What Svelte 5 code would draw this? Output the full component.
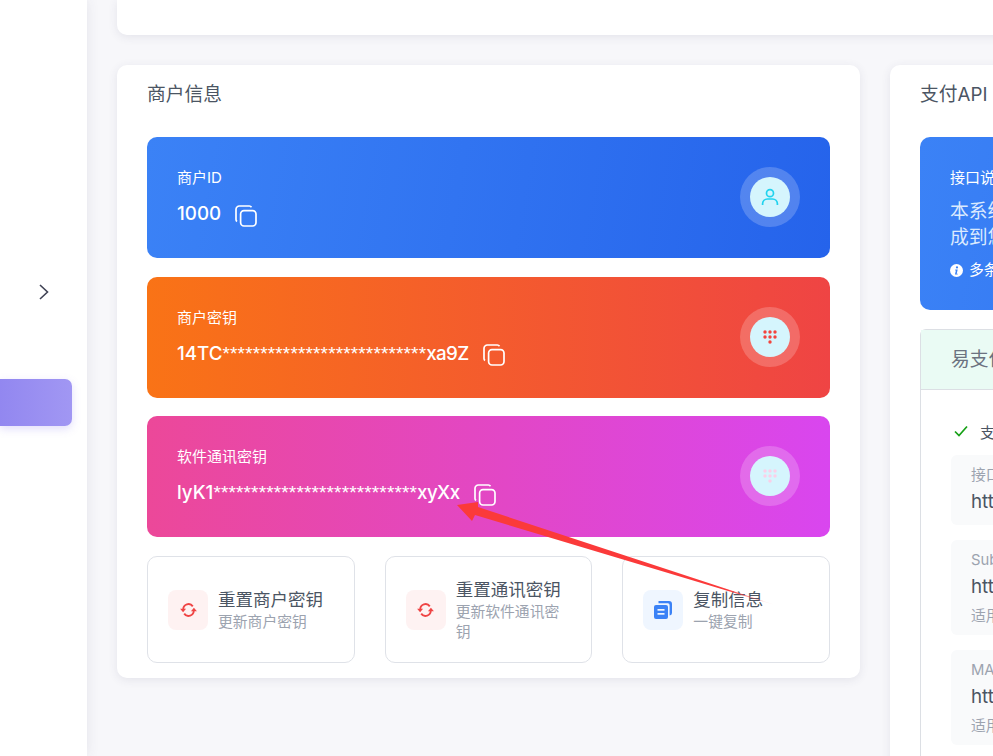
<script>
  const stars = '***************************';
  const keys = [
    { cls: 'blue', label: '商户ID', head: '1000', stars: '', tail: '', icon: 'user' },
    { cls: 'orange', label: '商户密钥', head: '14TC', stars, tail: 'xa9Z', icon: 'dots', dot: '#f4433c' },
    { cls: 'pink', label: '软件通讯密钥', head: 'lyK1', stars, tail: 'xyXx', icon: 'dots', dot: '#fbcfe8' }
  ];
  const actions = [
    { title: '重置商户密钥', sub: '更新商户密钥', icon: 'sync' },
    { title: '重置通讯密钥', sub: '更新软件通讯密钥', icon: 'sync' },
    { title: '复制信息', sub: '一键复制', icon: 'copy' }
  ];
  const dots = [[0,0],[5,0],[10,0],[0,5],[5,5],[10,5],[5,10]];
  const urls = [
    { label: '接口地址', url: 'https://pay.example.com/', note: '' },
    { label: 'Submit 接口', url: 'https://pay.example.com/submit.php', note: '适用于网页跳转支付' },
    { label: 'MAPI 接口', url: 'https://pay.example.com/mapi.php', note: '适用于服务器端调用' }
  ];
</script>

<div class="page">
  <aside class="side">
    <svg class="chev" width="12" height="16" viewBox="0 0 12 16"><path d="M2 1l7.5 7L2 15" fill="none" stroke="#3f4254" stroke-width="1.6"/></svg>
    <div class="pill"></div>
  </aside>

  <main class="main">
    <div class="top"></div>
    <div class="row">
      <section class="card left">
        <h2>商户信息</h2>
        <div class="keys">
          {#each keys as k}
            <div class="key {k.cls}">
              <div class="kt">
                <div class="lab">{k.label}</div>
                <div class="val">
                  <span>{k.head}<span class="stars">{k.stars}</span><span class="tail">{k.tail}</span></span>
                  <svg width="22" height="22" viewBox="0 0 22 22" fill="none" stroke="#fff" stroke-width="1.7">
                    <rect x="5.6" y="5.6" width="15.4" height="15.4" rx="3.4"/>
                    <path d="M2 16.5A2.6 2.6 0 0 1 1 14.4V4.4A3.4 3.4 0 0 1 4.4 1h9.8a2.6 2.6 0 0 1 2.3 1.2"/>
                  </svg>
                </div>
              </div>
              <div class="ring">
                <div class="disc">
                  {#if k.icon === 'user'}
                    <svg width="18" height="18" viewBox="0 0 18 18" fill="none" stroke="#22d3ee" stroke-width="1.7">
                      <circle cx="9" cy="5.2" r="3.5"/>
                      <path d="M1.6 17v-1.4A4.8 4.8 0 0 1 6.4 11h5.2a4.8 4.8 0 0 1 4.8 4.6V17"/>
                    </svg>
                  {:else}
                    <svg width="16" height="16" viewBox="0 0 16 16">
                      {#each dots as d}<circle cx={3 + d[0]} cy={3 + d[1]} r="1.7" fill={k.dot}/>{/each}
                    </svg>
                  {/if}
                </div>
              </div>
            </div>
          {/each}
        </div>
        <div class="acts">
          {#each actions as a}
            <div class="act">
              <div class="ico {a.icon}">
                {#if a.icon === 'sync'}
                  <svg width="17" height="14" viewBox="0 0 18 15" fill="none" stroke="#ef4444" stroke-width="2">
                    <path d="M3.4 7A5.6 5.6 0 0 1 13.600 3.600"/>
                    <path d="M14.600 8A5.6 5.6 0 0 1 4.400 11.400"/>
                    <path d="M0 6.200h6.400L3.200 10z" fill="#ef4444" stroke="none"/>
                    <path d="M18 8.800h-6.400L14.800 5z" fill="#ef4444" stroke="none"/>
                  </svg>
                {:else}
                  <svg width="18" height="18" viewBox="0 0 18 18">
                    <path d="M4.500 0H15a3 3 0 0 1 3 3v9a2.500 2.500 0 0 1-2.400 2.500V4a1.700 1.700 0 0 0-1.700-1.700H4.500z" fill="#3b82f6"/>
                    <rect x="0" y="4" width="14" height="14" rx="2" fill="#3b82f6"/>
                    <rect x="3.500" y="8" width="7" height="1.700" fill="#eff6ff"/>
                    <rect x="3.500" y="12" width="7" height="1.700" fill="#eff6ff"/>
                  </svg>
                {/if}
              </div>
              <div class="at">
                <div class="att">{a.title}</div>
                <div class="ats">{a.sub}</div>
              </div>
            </div>
          {/each}
        </div>
      </section>

      <section class="card right">
        <h2>支付API</h2>
        <div class="info">
          <div class="lab">接口说明</div>
          <p>本系统提供完整的支付接口，支持多种支付方式，可通过以下接口将功能集成到您的网站或应用中。</p>
          <div class="tip">
            <svg width="13" height="13" viewBox="0 0 13 13"><circle cx="6.5" cy="6.500" r="6.500" fill="#fff"/><circle cx="7" cy="3.400" r="1.100" fill="#3b82f6"/><path d="M5.300 5.600h2.400l-1 4.100h1v.8H4.900l1-4.100h-.8z" fill="#3b82f6"/></svg>
            <span>多条接口线路可供选择</span>
          </div>
        </div>
        <div class="panel">
          <div class="phead">易支付兼容接口</div>
          <div class="pbody">
            <div class="ok">
              <svg width="14" height="12" viewBox="0 0 14 12"><path d="M1 6.500l4 4 8-9" fill="none" stroke="#15a015" stroke-width="1.700"/></svg>
              <span>支持易支付接口协议</span>
            </div>
            {#each urls as u}
              <div class="url">
                <div class="ul">{u.label}</div>
                <div class="uv">{u.url}</div>
                {#if u.note}<div class="un">{u.note}</div>{/if}
              </div>
            {/each}
          </div>
        </div>
      </section>
    </div>
  </main>

  <svg class="arrow" width="993" height="756" viewBox="0 0 993 756">
    <defs>
      <linearGradient id="ag" gradientUnits="userSpaceOnUse" x1="457" y1="505" x2="775" y2="605">
        <stop offset="0.85" stop-color="#fb3a3a"/>
        <stop offset="1" stop-color="#fb3a3a" stop-opacity="0.1"/>
      </linearGradient>
    </defs>
    <path d="M457 505L478 502L478 507L775 605L475 515L472 521Z" fill="url(#ag)"/>
  </svg>
</div>

<style>
  :global(body) { margin: 0; background: #f7f7fa; }
  .page {
    position: relative;
    display: flex;
    width: 993px;
    height: 756px;
    overflow: hidden;
    background: #f7f7fa;
    font-family: Inter, "Noto Sans CJK SC", sans-serif;
  }
  .side {
    flex: none;
    width: 87px;
    background: #fff;
    box-shadow: 0 0 12px rgba(60, 60, 100, .1);
    padding-top: 284px;
    box-sizing: border-box;
  }
  .chev { display: block; margin-left: 38px; }
  .pill {
    margin-top: 79px;
    width: 72px;
    height: 47px;
    border-radius: 0 7px 7px 0;
    background: linear-gradient(90deg, #9287f0, #a197f3);
    box-shadow: 0 3px 8px rgba(139, 124, 240, .25);
  }
  .main { flex: none; width: 1500px; padding-left: 30px; }
  .top {
    width: 1500px;
    height: 35px;
    background: #fff;
    border-radius: 0 0 10px 10px;
    box-shadow: 0 2px 10px rgba(60, 60, 100, .1);
  }
  .row { display: flex; gap: 30px; align-items: flex-start; margin-top: 30px; }
  .card {
    flex: none;
    box-sizing: border-box;
    background: #fff;
    border-radius: 10px;
    box-shadow: 0 2px 10px rgba(60, 60, 100, .1);
    padding: 16px 30px;
  }
  .left { width: 743px; height: 613px; }
  .right { width: 743px; height: 760px; }
  h2 {
    margin: 0 0 29px;
    font-size: 18.75px;
    line-height: 27px;
    height: 27px;
    font-weight: 400;
    color: #4b5563;
  }
  .keys { display: flex; flex-direction: column; gap: 18.5px; }
  .key {
    display: flex;
    align-items: flex-start;
    justify-content: space-between;
    height: 121px;
    padding: 30px 30px 0;
    box-sizing: border-box;
    border-radius: 10px;
    color: #fff;
  }
  .blue { background: linear-gradient(100deg, #3b82f6, #2563eb); }
  .orange { background: linear-gradient(90deg, #f97316, #ef4444); }
  .pink { background: linear-gradient(90deg, #ec4899, #d946ef); }
  .lab { font-size: 15px; line-height: 22px; }
  .val {
    display: flex;
    align-items: center;
    gap: 14px;
    margin-top: 11px;
    font-size: 18.75px;
    font-weight: 500;
    line-height: 28px;
    height: 28px;
  }
  .val svg { margin-top: 3px; }
  .stars { font-family: "Liberation Sans", sans-serif; font-weight: 400; font-size: 19px; letter-spacing: .15px; }
  .tail { letter-spacing: -.6px; }
  .ring {
    width: 60px;
    height: 60px;
    border-radius: 50%;
    background: rgba(255, 255, 255, .2);
    display: flex;
    align-items: center;
    justify-content: center;
  }
  .disc {
    width: 40px;
    height: 40px;
    border-radius: 50%;
    background: #d5f5fd;
    display: flex;
    align-items: center;
    justify-content: center;
  }
  .acts { display: grid; grid-template-columns: repeat(3, 1fr); gap: 30px; margin-top: 19px; }
  .act {
    display: flex;
    align-items: center;
    gap: 10px;
    height: 107px;
    padding: 0 20px;
    box-sizing: border-box;
    border: 1px solid #dfe2e8;
    border-radius: 10px;
  }
  .ico {
    flex: none;
    width: 40px;
    height: 40px;
    border-radius: 8px;
    display: flex;
    align-items: center;
    justify-content: center;
  }
  .sync { background: #fef2f2; }
  .copy { background: #eff6ff; }
  .att { font-size: 17.500px; line-height: 24px; color: #4b5563; }
  .ats { font-size: 14.800px; line-height: 20px; color: #9ca3af; }
  .info {
    height: 173px;
    box-sizing: border-box;
    padding: 30px 30px 0;
    border-radius: 10px;
    background: linear-gradient(100deg, #3b82f6, #2563eb);
    color: #fff;
  }
  .info p {
    margin: 10px 0 0;
    font-size: 18.750px;
    line-height: 26px;
    color: #dbeafe;
  }
  .tip { display: flex; align-items: center; gap: 6px; margin-top: 8px; font-size: 14.800px; line-height: 22px; white-space: nowrap; }
  .panel {
    margin-top: 19px;
    border: 1px solid #dcdfe4;
    border-bottom: none;
    border-radius: 6px 0 0 0;
    height: 500px;
  }
  .phead {
    height: 60px;
    box-sizing: border-box;
    padding-left: 30px;
    background: #eafbf4;
    border-bottom: 1px solid #dcdfe4;
    font-size: 18.750px;
    line-height: 60px;
    color: #6b7280;
  }
  .pbody { padding: 30px; }
  .ok { display: flex; align-items: center; gap: 12px; height: 22px; margin: 0 0 13px 3px; font-size: 14.800px; color: #4b5563; }
  .url {
    box-sizing: border-box;
    padding: 9px 20px 8px;
    margin-bottom: 15px;
    border-radius: 6px;
    background: #f9fafb;
  }
  .ul, .un { font-size: 14.800px; line-height: 22px; color: #9ca3af; }
  .uv { margin-top: 1px; font-size: 18.750px; line-height: 30px; color: #4b5563; }
  .un { margin-top: 3px; }
  .arrow { position: absolute; left: 0; top: 0; pointer-events: none; }
</style>
